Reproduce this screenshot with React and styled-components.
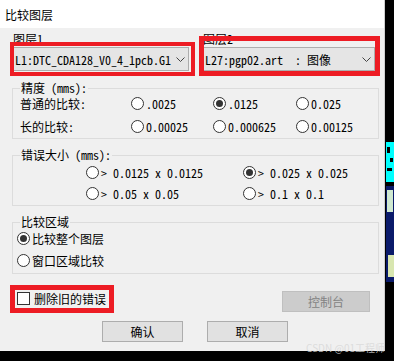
import React from 'react';
import styled, { createGlobalStyle } from 'styled-components';

const GlobalStyle = createGlobalStyle`
  html, body {
    margin: 0;
    padding: 0;
    background: #000;
  }
  body {
    font-family: "Noto Sans Mono CJK SC", "Noto Sans CJK SC", "Liberation Mono", monospace;
    font-size: 12px;
    color: #000;
  }
`;

const Screen = styled.div`
  position: relative;
  width: 394px;
  height: 361px;
  display: flex;
  align-items: flex-start;
  overflow: hidden;
  background: #000;
`;

const Dialog = styled.div`
  width: 385px;
  height: 351px;
  box-sizing: border-box;
  border-right: 1px solid #cfcfcf;
  background: #f0f0f0;
  display: flex;
  flex-direction: column;
`;

const TitleBar = styled.div`
  height: 28px;
  flex-shrink: 0;
  background: #fff;
  display: flex;
  align-items: center;
  padding-left: 5px;
  font-family: "Noto Sans CJK SC", sans-serif;
  font-size: 12px;
`;

const Body = styled.div`
  display: flex;
  flex-direction: column;
  padding: 0 5px 0 12px;
`;

const LayerRow = styled.div`
  display: grid;
  grid-template-columns: 176px 172px;
  column-gap: 14px;
  margin-top: 4px;
  padding-left: 1px;
`;

const LayerCell = styled.div`
  display: flex;
  flex-direction: column;
`;

const LayerLabel = styled.span`
  height: 14px;
  line-height: 14px;
`;

const Combo = styled.div`
  margin-top: 1px;
  height: 24px;
  box-sizing: border-box;
  border: 1px solid #adadad;
  background: #e5e5e5;
  display: flex;
  align-items: center;
  justify-content: space-between;
  padding: 0 3px 0 1px;
  white-space: pre;
  overflow: hidden;
`;

const Group = styled.fieldset`
  margin: ${p => p.$top}px 0 0;
  padding: 0;
  border: 1px solid #dcdcdc;
  min-width: 0;
`;

const Legend = styled.legend`
  margin-left: 7px;
  padding: 0 1px;
  line-height: 14px;
  white-space: pre;
`;

const OptionGrid = styled.div`
  display: grid;
  grid-template-columns: ${p => p.$cols};
  grid-auto-rows: 16px;
  row-gap: ${p => p.$gap}px;
  align-items: center;
  padding: ${p => p.$pad};
`;

const RowLabel = styled.span`
  white-space: pre;
`;

const Option = styled.label`
  display: flex;
  align-items: center;
  gap: 2px;
  white-space: pre;
`;

const Radio = styled.span`
  width: 13px;
  height: 13px;
  flex-shrink: 0;
  box-sizing: border-box;
  border: 1px solid #333;
  border-radius: 50%;
  background: #fff;
  display: grid;
  place-items: center;
  &::after {
    content: '';
    width: 7px;
    height: 7px;
    border-radius: 50%;
    background: ${p => (p.$on ? '#333' : 'transparent')};
  }
`;

const BottomRow = styled.div`
  margin-top: 17px;
  display: flex;
  justify-content: space-between;
  align-items: flex-start;
  padding: 0 9px 0 5px;
`;

const CheckOption = styled.label`
  display: flex;
  align-items: center;
  gap: 4px;
  height: 14px;
`;

const Checkbox = styled.span`
  width: 13px;
  height: 13px;
  box-sizing: border-box;
  border: 1px solid #333;
  background: #fff;
`;

const Button = styled.div`
  width: ${p => p.$w}px;
  height: 21px;
  box-sizing: border-box;
  border: 1px solid ${p => (p.$disabled ? '#bfbfbf' : '#adadad')};
  background: ${p => (p.$disabled ? '#cccccc' : '#e1e1e1')};
  color: ${p => (p.$disabled ? '#838383' : '#000')};
  display: flex;
  align-items: center;
  justify-content: center;
`;

const ButtonRow = styled.div`
  margin-top: 9px;
  display: flex;
  gap: 24px;
  padding-left: 90px;
`;

const Marker = styled.div`
  position: absolute;
  left: ${p => p.$x}px;
  top: ${p => p.$y}px;
  width: ${p => p.$w}px;
  height: ${p => p.$h}px;
  box-sizing: border-box;
  border: ${p => p.$t}px solid #ed1c24;
  pointer-events: none;
`;

const Watermark = styled.div`
  position: absolute;
  right: 9px;
  bottom: 6px;
  font-family: "Noto Sans CJK SC", sans-serif;
  font-size: 10px;
  color: rgba(215, 215, 215, 0.8);
`;

const Chevron = () => (
  <svg width="9" height="5" viewBox="0 0 9 5">
    <polyline points="0.5,0.5 4.5,4.5 8.5,0.5" fill="none" stroke="#444" strokeWidth="1" />
  </svg>
);

const SideStrip = () => (
  <svg width="9" height="361" viewBox="0 0 9 361">
    <rect x="0" y="0" width="9" height="361" fill="#000" />
    <rect x="1" y="142" width="8" height="40" fill="#0ff" />
    <rect x="2" y="147" width="3" height="6" fill="#000" />
    <rect x="5" y="158" width="3" height="4" fill="#000" />
    <rect x="2" y="168" width="5" height="3" fill="#000" />
    <rect x="1" y="186" width="8" height="96" fill="#0a1a6a" />
    <rect x="2" y="190" width="6" height="22" fill="#cfe8d0" />
    <rect x="3" y="255" width="6" height="22" fill="#d8e6b0" />
  </svg>
);

const precisionRows = [
  { label: '普通的比较:', opts: ['.0025', '.0125', '0.025'], on: 1 },
  { label: '长的比较:', opts: ['0.00025', '0.000625', '0.00125'], on: -1 },
];

const sizeOpts = ['> 0.0125 x 0.0125', '> 0.025 x 0.025', '> 0.05 x 0.05', '> 0.1 x 0.1'];

export default function App() {
  return (
    <Screen>
      <GlobalStyle />
      <Dialog>
        <TitleBar>比较图层</TitleBar>
        <Body>
          <LayerRow>
            <LayerCell>
              <LayerLabel>图层1</LayerLabel>
              <Combo>
                <span>L1:DTC_CDA128_V0_4_1pcb.G1</span>
                <Chevron />
              </Combo>
            </LayerCell>
            <LayerCell>
              <LayerLabel>图层2</LayerLabel>
              <Combo>
                <span>L27:pgp02.art  : 图像</span>
                <Chevron />
              </Combo>
            </LayerCell>
          </LayerRow>

          <Group $top={10}>
            <Legend>精度 (mms):</Legend>
            <OptionGrid $cols="111px 82px 83px 1fr" $gap={7} $pad="0 0 4px 7px">
              {precisionRows.map(row => (
                <React.Fragment key={row.label}>
                  <RowLabel>{row.label}</RowLabel>
                  {row.opts.map((o, i) => (
                    <Option key={o}>
                      <Radio $on={i === row.on} />
                      {o}
                    </Option>
                  ))}
                </React.Fragment>
              ))}
            </OptionGrid>
          </Group>

          <Group $top={9}>
            <Legend>错误大小 (mms):</Legend>
            <OptionGrid $cols="157px 1fr" $gap={5} $pad="2px 0 4px 73px">
              {sizeOpts.map((o, i) => (
                <Option key={o}>
                  <Radio $on={i === 1} />
                  {o}
                </Option>
              ))}
            </OptionGrid>
          </Group>

          <Group $top={9}>
            <Legend>比较区域</Legend>
            <OptionGrid $cols="1fr" $gap={6} $pad="1px 0 5px 4px">
              <Option>
                <Radio $on />
                比较整个图层
              </Option>
              <Option>
                <Radio />
                窗口区域比较
              </Option>
            </OptionGrid>
          </Group>

          <BottomRow>
            <CheckOption>
              <Checkbox />
              删除旧的错误
            </CheckOption>
            <Button $w={88} $disabled>控制台</Button>
          </BottomRow>

          <ButtonRow>
            <Button $w={81}>确认</Button>
            <Button $w={81}>取消</Button>
          </ButtonRow>
        </Body>
      </Dialog>
      <SideStrip />

      <Marker $x={10} $y={42} $w={185} $h={34} $t={4} />
      <Marker $x={199} $y={36} $w={181} $h={40} $t={5} />
      <Marker $x={10} $y={285} $w={104} $h={28} $t={5} />
      <Watermark>CSDN @01工程师</Watermark>
    </Screen>
  );
}
